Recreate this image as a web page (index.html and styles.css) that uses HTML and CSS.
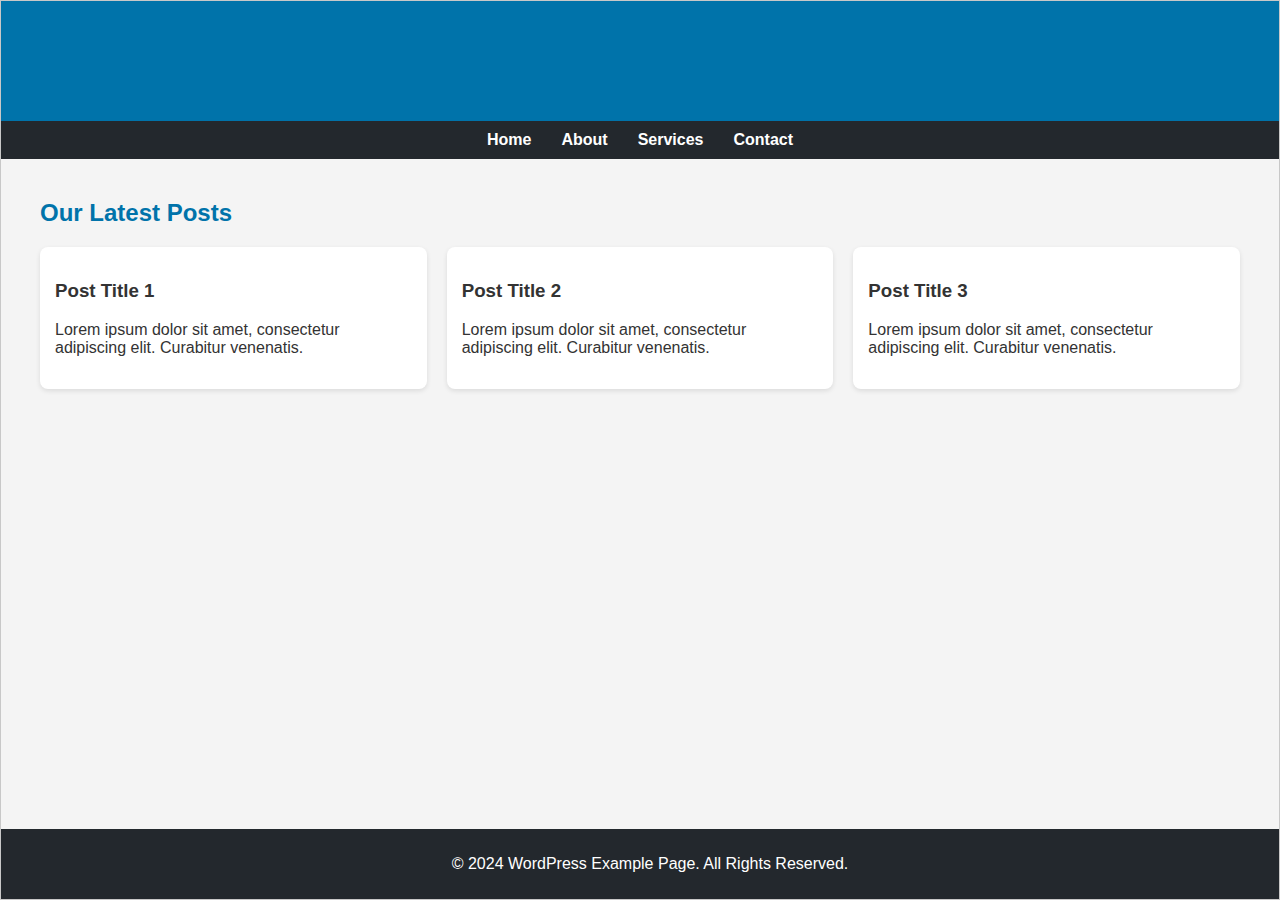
FILE: index.html
```html
<!DOCTYPE html>
<html lang="en">
<head>
<meta charset="utf-8">
<title>WordPress Example Page</title>
<link rel="stylesheet" href="styles.css">
</head>
<body>
<div class="page">
  <header class="site-header"></header>
  <nav class="site-nav">
    <a href="#">Home</a>
    <a href="#">About</a>
    <a href="#">Services</a>
    <a href="#">Contact</a>
  </nav>
  <main class="content">
    <h2 class="section-title">Our Latest Posts</h2>
    <div class="posts">
      <article class="post">
        <h3>Post Title 1</h3>
        <p>Lorem ipsum dolor sit amet, consectetur adipiscing elit. Curabitur venenatis.</p>
      </article>
      <article class="post">
        <h3>Post Title 2</h3>
        <p>Lorem ipsum dolor sit amet, consectetur adipiscing elit. Curabitur venenatis.</p>
      </article>
      <article class="post">
        <h3>Post Title 3</h3>
        <p>Lorem ipsum dolor sit amet, consectetur adipiscing elit. Curabitur venenatis.</p>
      </article>
    </div>
  </main>
  <footer class="site-footer">
    <p>&copy; 2024 WordPress Example Page. All Rights Reserved.</p>
  </footer>
</div>
</body>
</html>
```
FILE: styles.css
```css
html, body {
  margin: 0;
  padding: 0;
}
body {
  font-family: "Liberation Sans", Arial, sans-serif;
  color: #333;
  background: #f4f4f4;
}
.page {
  box-sizing: border-box;
  height: 900px;
  border: 1px solid #c8c8c8;
  display: flex;
  flex-direction: column;
  background: #f4f4f4;
}
.site-header {
  height: 120px;
  background: #0073aa;
}
.site-nav {
  background: #23282d;
  display: flex;
  justify-content: center;
  padding: 10px 0;
  line-height: 18px;
}
.site-nav a {
  color: #fff;
  text-decoration: none;
  font-weight: bold;
  font-size: 16px;
  padding: 0 15px;
}
.content {
  flex: 1;
  padding: 20px 39px;
}
.section-title {
  color: #0073aa;
  font-size: 24px;
  margin: 20px 0;
  line-height: 28px;
}
.posts {
  display: grid;
  grid-template-columns: repeat(3, 1fr);
  gap: 20px;
}
.post {
  background: #fff;
  border-radius: 8px;
  padding: 15px;
  box-shadow: 0 2px 5px rgba(0, 0, 0, 0.1);
}
.post h3 {
  font-size: 18.72px;
  margin: 18px 0 19px;
  line-height: 22px;
}
.post p {
  font-size: 16px;
  line-height: 18px;
  margin: 0 0 17px;
}
.site-footer {
  background: #23282d;
  color: #fff;
  text-align: center;
  padding: 26px 0 26px 20px;
}
.site-footer p {
  margin: 0;
  font-size: 16px;
  line-height: 18px;
}
```
